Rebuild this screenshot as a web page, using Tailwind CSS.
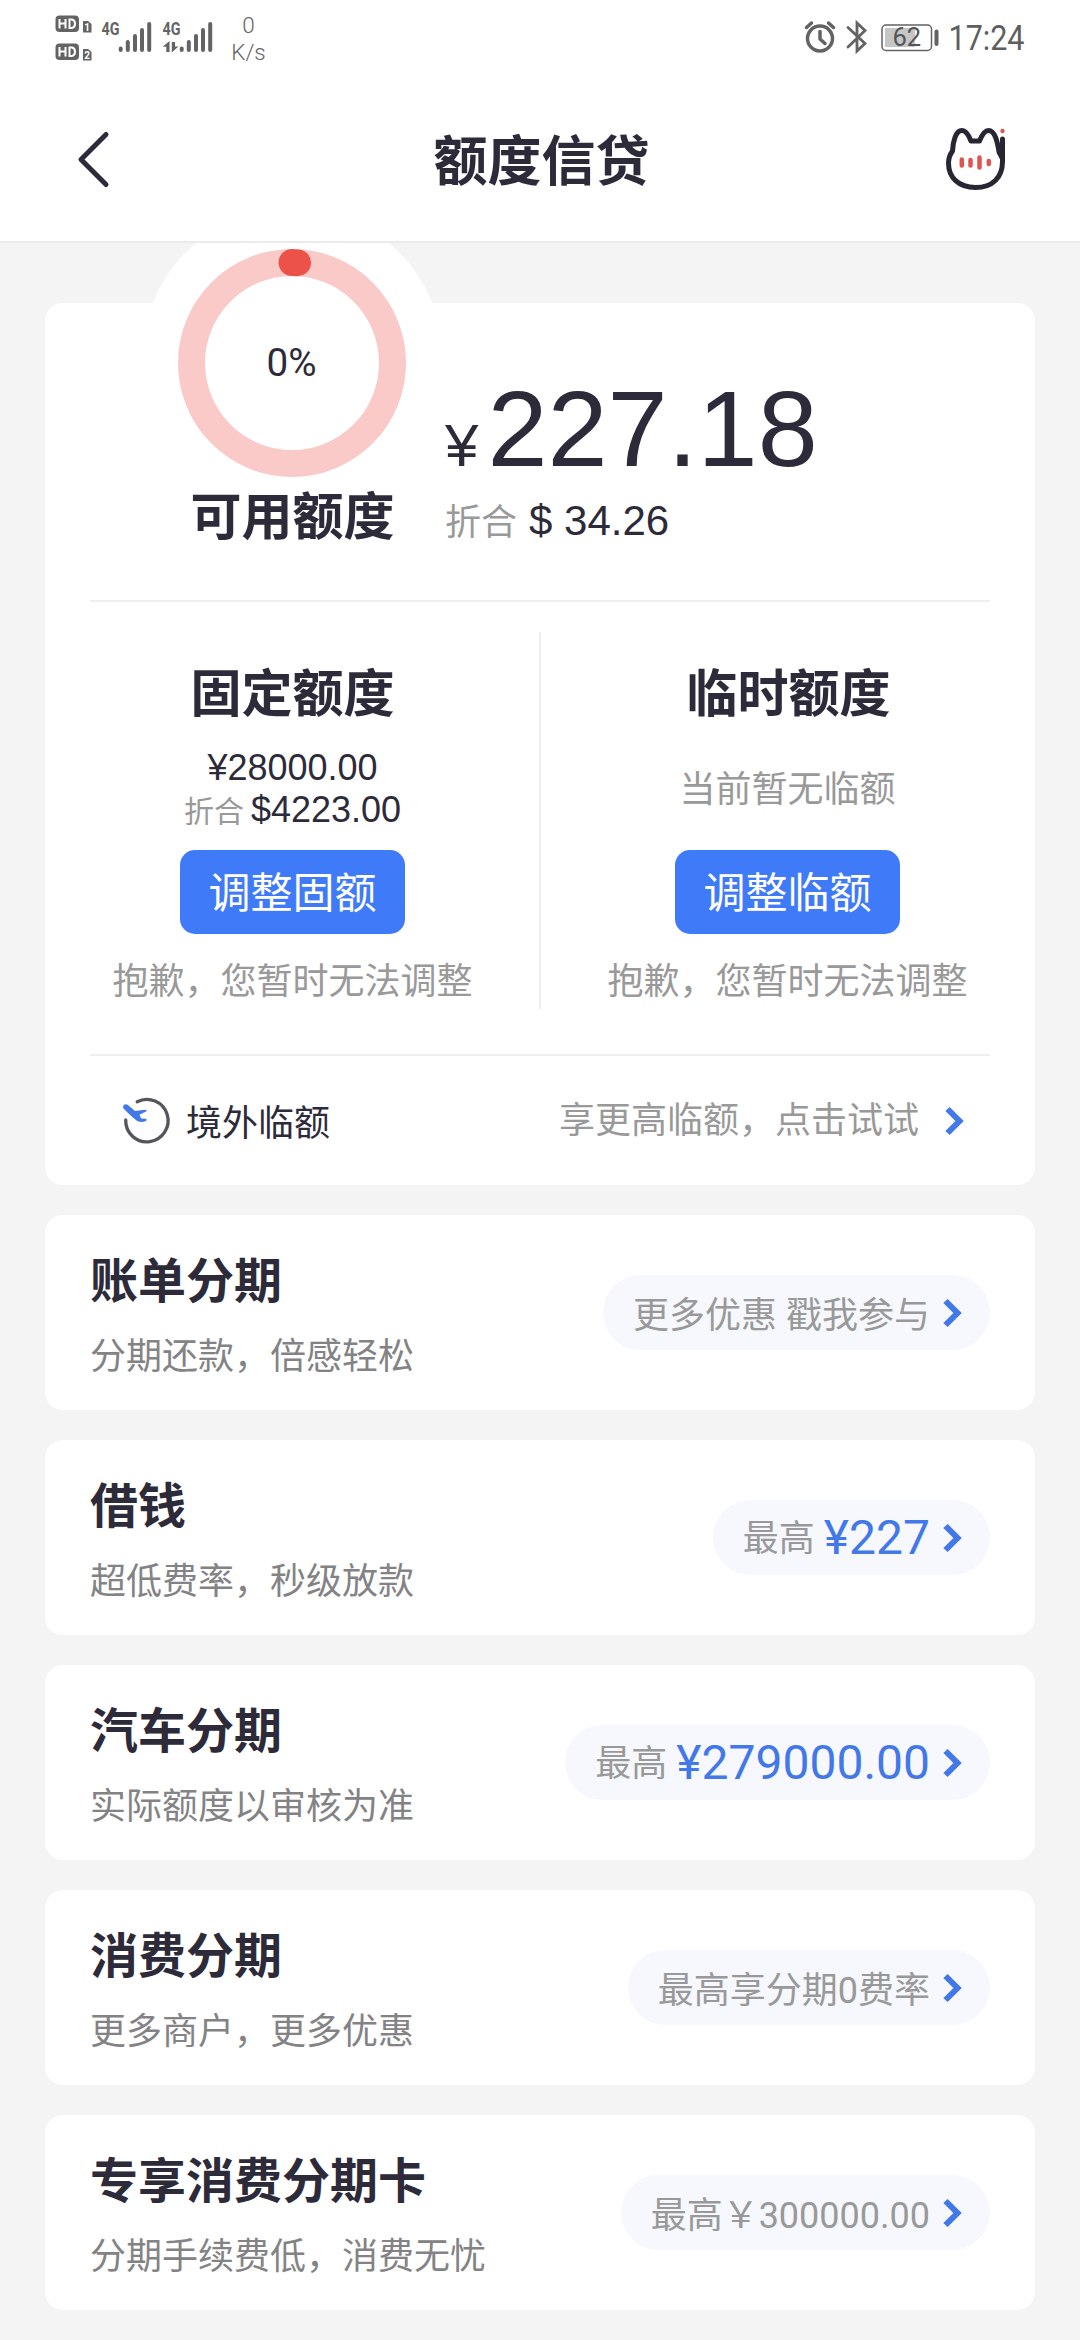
<!DOCTYPE html>
<html lang="zh-CN">
<head>
<meta charset="utf-8">
<title>额度信贷</title>
<script src="https://cdn.jsdelivr.net/npm/@tailwindcss/browser@4"></script>
</head>
<body class="w-[1080px] h-[2340px] overflow-hidden bg-[#f4f4f4] font-[Roboto,'Noto_Sans_CJK_SC',sans-serif] text-[#2d2b3a]">
<header class="flex h-[243px] flex-col border-b-2 border-[#ebebeb] bg-white">
  <!-- status bar -->
  <div class="flex h-[80px] justify-between">
    <svg class="h-[80px] w-[300px]" viewBox="0 0 300 80" fill="#636363" font-family="Roboto">
      <rect x="55.500" y="15.500" width="23.500" height="16.500" rx="4"/>
      <rect x="55.500" y="43.500" width="23.500" height="16.500" rx="4"/>
      <g fill="none" stroke="#fff" stroke-width="2">
        <path d="M59.500 19v9.500M59.500 23.500h6M65.500 19v9.500M69.500 19.500v8.500h2.500q3-.5 3-4.200t-3-4.300z"/>
        <path d="M59.500 47v9.500M59.500 51.500h6M65.500 47v9.500M69.500 47.500v8.500h2.500q3-.5 3-4.200t-3-4.300z"/>
      </g>
      <path d="M83 21h5l3.500 3v8.500H83zM83 49h5l3.500 3v8.500H83z"/>
      <text x="84.300" y="31" font-size="10" font-weight="700" fill="#fff">1</text>
      <text x="84.300" y="59" font-size="10" font-weight="700" fill="#fff">2</text>
      <g font-size="18" font-weight="700">
        <text x="101.500" y="35" textLength="18" lengthAdjust="spacingAndGlyphs">4G</text>
        <text x="162.500" y="35" textLength="18" lengthAdjust="spacingAndGlyphs">4G</text>
      </g>
      <g stroke="#636363" stroke-width="4" stroke-linecap="round">
        <path d="M120.700 48.500v1.500M127.800 42v8M135 36v14M142 30v20M149.200 24v26"/>
        <path d="M181.700 48.500v1.500M188.800 42v8M196 36v14M203 30v20M210.200 24v26"/>
      </g>
      <path d="M169.500 52h-3.200v-5.200h-3.600l6.800-5.800zM171.800 42h3.200v4.500h3.500l-6.700 6z"/>
      <g font-size="22.500" font-weight="300" text-anchor="middle">
        <text x="248.500" y="33">0</text>
        <text x="248.500" y="60">K/s</text>
      </g>
    </svg>
    <svg class="h-[80px] w-[300px]" viewBox="780 0 300 80" fill="none" stroke="#636363" font-family="Roboto">
      <circle cx="820" cy="38.500" r="12.500" stroke-width="3.500"/>
      <path d="M820 31.500v7.500l5 4.500" stroke-width="3.500" stroke-linecap="round" stroke-linejoin="round"/>
      <path d="M806.500 27.500l5-4.500M833.500 27.500l-5-4.500" stroke-width="3.500" stroke-linecap="round"/>
      <path d="M848 27.500l17 16-8 7.500V23l8 7.500-17 16.500" stroke-width="2.800" stroke-linecap="round"/>
      <rect x="882" y="25" width="49.500" height="25.500" rx="4" stroke-width="1.500"/>
      <rect x="885" y="28" width="30" height="19" fill="#c6c6c6" stroke="none"/>
      <path d="M936.500 31.500v12.500" stroke-width="4" stroke-linecap="round"/>
      <g fill="#555" stroke="none">
        <text x="892.500" y="46.300" font-size="25.500">62</text>
        <text x="948.500" y="50" font-size="35" fill="#5e5e5e" textLength="76" lengthAdjust="spacingAndGlyphs">17:24</text>
      </g>
    </svg>
  </div>
  <!-- title bar -->
  <div class="flex h-[160px] items-center justify-between pl-[75px] pr-[72px]">
    <svg class="h-[60px] w-[63px]" viewBox="0 0 63 60" fill="none" stroke="#2d2b3a" stroke-width="5" stroke-linecap="round" stroke-linejoin="round"><path d="M31 4.500L6 29.500l25 25"/></svg>
    <h1 class="pt-[6px] text-[54px] leading-[80px] font-bold">额度信贷</h1>
    <svg class="h-[66px] w-[63px]" viewBox="945 127 63 66" fill="none" stroke="#272633" stroke-width="5" stroke-linecap="round" stroke-linejoin="round">
      <path d="M1002.500 139v22.500c0 16-10 26-27 26s-27-10-27-24.500c0-5 1.500-8.500 4-12 .5-9 3-20.500 9.500-20.500 4.500 0 7 5.500 9 10.500h8.500c2-5 4.500-10.500 9-10.500 6.500 0 9 11.500 10.500 21.500l3.200 6"/>
      <g stroke="#df5450" stroke-width="4.500"><path d="M961.800 159.500v6M970.500 160v5.500M979.500 157.500v10M988.800 161v3"/></g>
      <circle cx="1002.500" cy="131" r="2.200" fill="#df5450" stroke="none"/>
    </svg>
  </div>
</header>

<main class="flex h-[2097px] flex-col gap-[30px] overflow-hidden px-[45px] pt-[60px]">
  <section class="relative h-[882px] shrink-0 rounded-[18px] bg-white">
    <!-- usage ring, rising above the card -->
    <svg class="absolute -top-[95px] left-[97px] h-[301px] w-[301px]" viewBox="142 208 301 301" fill="none">
      <circle cx="292.500" cy="358.500" r="150.500" fill="#fff"/>
      <circle cx="292" cy="363" r="100.500" stroke="#f9cac8" stroke-width="27"/>
      <path d="M292 262.500q2.800 0 5.500.3" stroke="#ed5248" stroke-width="27" stroke-linecap="round"/>
      <text x="291.500" y="376" text-anchor="middle" font-family="Roboto" font-size="39" textLength="50" lengthAdjust="spacingAndGlyphs" fill="#2d2b3a">0%</text>
    </svg>
    <div class="relative flex h-[297px]">
      <h2 class="w-[400px] pt-[179px] pl-[95px] text-center text-[51px] leading-[72px] font-bold">可用额度</h2>
      <div class="pt-[72px] font-['Liberation_Sans','Noto_Sans_CJK_SC',sans-serif]">
        <p class="flex h-[108px] items-baseline gap-[9px] leading-[108px]"><span class="text-[60px]">¥</span><span class="text-[108px]">227.18</span></p>
        <p class="mt-[14px] flex items-baseline gap-[12px] leading-[48px]"><span class="text-[36px] text-[#999]">折合</span><span class="text-[42px]">$ 34.26</span></p>
      </div>
    </div>
    <div class="mx-[45px] h-[2px] bg-[#eee]"></div>
    <div class="flex h-[452px] items-start text-center">
      <div class="flex w-[495px] flex-col items-center pt-[57px]">
        <h2 class="text-[51px] leading-[72px] font-bold">固定额度</h2>
        <div class="mt-[15px] h-[84px] pt-[1px] font-['Liberation_Sans','Noto_Sans_CJK_SC',sans-serif] text-[36px] leading-[42px]">
          <p>¥28000.00</p>
          <p class="flex items-baseline justify-center gap-[7px]"><span class="text-[30px] text-[#999]">折合</span><span>$4223.00</span></p>
        </div>
        <button class="mt-[20px] h-[84px] w-[225px] rounded-[15px] bg-[#3f7af9] pt-[4px] text-[42px] leading-[80px] text-white">调整固额</button>
        <p class="mt-[21px] text-[36px] leading-[54px] text-[#999]">抱歉，您暂时无法调整</p>
      </div>
      <div class="-mx-px mt-[30px] h-[377px] w-[2px] bg-[#eee]"></div>
      <div class="flex w-[495px] flex-col items-center pt-[57px]">
        <h2 class="pl-[2px] text-[51px] leading-[72px] font-bold">临时额度</h2>
        <p class="mt-[15px] h-[84px] pt-[17px] text-[36px] leading-[54px] text-[#999]">当前暂无临额</p>
        <button class="mt-[20px] h-[84px] w-[225px] rounded-[15px] bg-[#3f7af9] pt-[4px] text-[42px] leading-[80px] text-white">调整临额</button>
        <p class="mt-[21px] text-[36px] leading-[54px] text-[#999]">抱歉，您暂时无法调整</p>
      </div>
    </div>
    <div class="mx-[45px] h-[2px] bg-[#eee]"></div>
    <div class="flex h-[129px] items-center pr-[68px] pl-[75px]">
      <svg class="h-[54px] w-[54px]" viewBox="120 1093 54 54" fill="none">
        <path d="M137.200 1100.800A21.200 21.200 0 1 1 125.700 1119" stroke="#55555b" stroke-width="3.300" stroke-linecap="round"/>
        <path d="M123.300 1104.500q2-2.200 4.300-.8L135 1110l10-1.200q2.800.3 1 1.800l-6.500 3.200 1.700 3.700 4.800.3q1.500 1 0 2.200-4 1.600-7.500.6-2.500-1-10.500-8.600l-4.500-4.500q-.8-1.500-.2-3z" fill="#4378e8"/>
      </svg>
      <span class="ml-[12px] pt-[6px] text-[36px] leading-[54px]">境外临额</span>
      <span class="ml-auto text-[36px] leading-[54px] text-[#999]">享更高临额，点击试试</span>
      <svg class="ml-[26px] h-[32px] w-[22px]" viewBox="0 0 22 32" fill="none" stroke="#4278e8" stroke-width="6"><path d="M2.500 4l12 12-12 12"/></svg>
    </div>
  </section>

  <section class="flex h-[195px] shrink-0 items-center justify-between rounded-[18px] bg-white px-[45px]">
    <div class="pt-[4px]">
      <h3 class="text-[48px] leading-[72px] font-bold">账单分期</h3>
      <p class="mt-[12px] text-[36px] leading-[54px] text-[#838385]">分期还款，倍感轻松</p>
    </div>
    <div class="flex h-[75px] items-center rounded-full bg-[#f6f8fe] pr-[25px] pl-[30px] text-[36px] leading-[54px] text-[#999]">
      <span class="pt-[6px]">更多优惠 戳我参与</span>
      <svg class="ml-[13px] h-[32px] w-[22px]" viewBox="0 0 22 32" fill="none" stroke="#4278e8" stroke-width="6"><path d="M2.500 4l12 12-12 12"/></svg>
    </div>
  </section>

  <section class="flex h-[195px] shrink-0 items-center justify-between rounded-[18px] bg-white px-[45px]">
    <div class="pt-[4px]">
      <h3 class="text-[48px] leading-[72px] font-bold">借钱</h3>
      <p class="mt-[12px] text-[36px] leading-[54px] text-[#838385]">超低费率，秒级放款</p>
    </div>
    <div class="flex h-[75px] items-center rounded-full bg-[#f6f8fe] pr-[25px] pl-[30px] text-[36px] leading-[54px] text-[#999]">
      <span class="pt-[2px]">最高</span><span class="ml-[9px] text-[48px] text-[#4278e8]">¥227</span>
      <svg class="ml-[13px] h-[32px] w-[22px]" viewBox="0 0 22 32" fill="none" stroke="#4278e8" stroke-width="6"><path d="M2.500 4l12 12-12 12"/></svg>
    </div>
  </section>

  <section class="flex h-[195px] shrink-0 items-center justify-between rounded-[18px] bg-white px-[45px]">
    <div class="pt-[4px]">
      <h3 class="text-[48px] leading-[72px] font-bold">汽车分期</h3>
      <p class="mt-[12px] text-[36px] leading-[54px] text-[#838385]">实际额度以审核为准</p>
    </div>
    <div class="flex h-[75px] items-center rounded-full bg-[#f6f8fe] pr-[25px] pl-[30px] text-[36px] leading-[54px] text-[#999]">
      <span class="pt-[2px]">最高</span><span class="ml-[9px] text-[48px] text-[#4278e8]">¥279000.00</span>
      <svg class="ml-[13px] h-[32px] w-[22px]" viewBox="0 0 22 32" fill="none" stroke="#4278e8" stroke-width="6"><path d="M2.500 4l12 12-12 12"/></svg>
    </div>
  </section>

  <section class="flex h-[195px] shrink-0 items-center justify-between rounded-[18px] bg-white px-[45px]">
    <div class="pt-[4px]">
      <h3 class="text-[48px] leading-[72px] font-bold">消费分期</h3>
      <p class="mt-[12px] text-[36px] leading-[54px] text-[#838385]">更多商户，更多优惠</p>
    </div>
    <div class="flex h-[75px] items-center rounded-full bg-[#f6f8fe] pr-[25px] pl-[30px] text-[36px] leading-[54px] text-[#999]">
      <span class="pt-[6px]">最高享分期0费率</span>
      <svg class="ml-[13px] h-[32px] w-[22px]" viewBox="0 0 22 32" fill="none" stroke="#4278e8" stroke-width="6"><path d="M2.500 4l12 12-12 12"/></svg>
    </div>
  </section>

  <section class="flex h-[195px] shrink-0 items-center justify-between rounded-[18px] bg-white px-[45px]">
    <div class="pt-[4px]">
      <h3 class="text-[48px] leading-[72px] font-bold">专享消费分期卡</h3>
      <p class="mt-[12px] text-[36px] leading-[54px] text-[#838385]">分期手续费低，消费无忧</p>
    </div>
    <div class="flex h-[75px] items-center rounded-full bg-[#f6f8fe] pr-[25px] pl-[30px] text-[36px] leading-[54px] text-[#999]">
      <span class="pt-[6px]">最高￥300000.00</span>
      <svg class="ml-[13px] h-[32px] w-[22px]" viewBox="0 0 22 32" fill="none" stroke="#4278e8" stroke-width="6"><path d="M2.500 4l12 12-12 12"/></svg>
    </div>
  </section>
</main>
</body>
</html>
